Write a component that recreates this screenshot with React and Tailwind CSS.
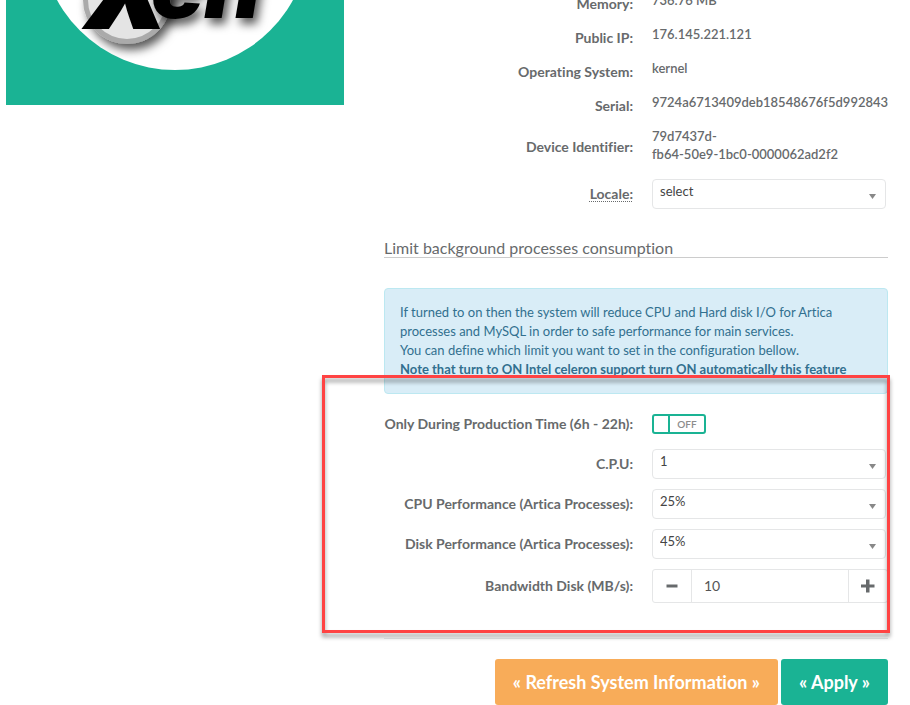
import React, { useState } from 'react';

const Row = ({ label, htmlFor, abbr, children }) => (
  <div className="flex items-center gap-[19px]">
    <label htmlFor={htmlFor} className="flex-1 pt-1 text-right text-sm leading-[18px] font-bold whitespace-nowrap">
      {abbr ? <span className="underline decoration-dotted decoration-1 underline-offset-2">{label}</span> : label}
    </label>
    <div className="w-[236px] shrink-0 self-start">{children}</div>
  </div>
);

const Value = ({ children }) => (
  <p className="text-[13px] leading-[18px] font-semibold">{children}</p>
);

const Select = ({ id, options }) => (
  <div className="relative mt-1 mr-0.5">
    <select
      id={id}
      className="block h-[30px] w-full appearance-none rounded-[4px] border border-[#e5e6e7] bg-white px-[7px] pb-1.5 text-[13px] leading-[18px] text-[#444]"
    >
      {options.map((option) => (
        <option key={option}>{option}</option>
      ))}
    </select>
    <svg className="pointer-events-none absolute right-2.5 bottom-2.5 h-[5px] w-[7px]" viewBox="0 0 7 5">
      <path d="M0 0H7L3.5 5Z" fill="#888" />
    </svg>
  </div>
);

const Switch = ({ id }) => {
  const [on, setOn] = useState(false);

  return (
    <div className="relative mt-1 flex h-5 w-[54px] overflow-hidden rounded-[3px] border-2 border-[#1ab394] bg-white">
      <input
        id={id}
        type="checkbox"
        checked={on}
        onChange={() => setOn(!on)}
        className="absolute inset-0 h-full w-full cursor-pointer appearance-none"
      />
      <span className="w-4 border-r-2 border-[#1ab394]" />
      <span className="flex-1 text-center text-[10px] leading-4 font-semibold text-[#8c8c8c]">{on ? 'ON' : 'OFF'}</span>
    </div>
  );
};

const Spinner = ({ id }) => {
  const [value, setValue] = useState(10);

  return (
    <div className="mt-1 flex h-[34px] rounded-[3px] border border-[#e5e6e7] bg-white">
      <button aria-label="-" onClick={() => setValue(value - 1)} className="flex w-[38px] items-center justify-center">
        <svg className="h-3.5 w-3.5" viewBox="0 0 14 14">
          <path d="M1.5 5.5h11v3h-11z" fill="#676a6c" />
        </svg>
      </button>
      <input
        id={id}
        value={value}
        onChange={(e) => setValue(Number(e.target.value) || 0)}
        className="w-0 flex-1 border-x border-[#e5e6e7] px-3 text-sm text-[#555]"
      />
      <button aria-label="+" onClick={() => setValue(value + 1)} className="flex w-[38px] items-center justify-center">
        <svg className="h-3.5 w-3.5" viewBox="0 0 14 14">
          <path d="M5 0.5h3.5v5h5v3h-5v5h-3.5v-5h-5v-3h5z" fill="#676a6c" />
        </svg>
      </button>
    </div>
  );
};

const XenLogo = () => (
  <svg className="block h-[105px] w-full bg-[#1ab394]" viewBox="0 0 338 105">
    <defs>
      <filter id="soft" x="-20%" y="-20%" width="150%" height="150%">
        <feDropShadow dx="4" dy="6" stdDeviation="5" floodColor="#000" floodOpacity="0.65" />
      </filter>
      <clipPath id="disc">
        <circle cx="169" cy="-64.5" r="134.5" />
      </clipPath>
    </defs>
    <circle cx="169" cy="-64.5" r="134.5" fill="#fff" />
    <g clipPath="url(#disc)">
      <g filter="url(#soft)">
        <circle cx="121" cy="0" r="44" fill="#aaa" />
        <circle cx="121" cy="0" r="39" fill="#e4e4e4" />
      </g>
      <g fontFamily="Inter, sans-serif" fontStyle="italic" fontWeight="900">
        <text x="80" y="29" fontSize="134">x</text>
        <text x="145" y="18" fontSize="88" filter="url(#soft)">en</text>
      </g>
    </g>
  </svg>
);

const App = () => {
  return (
    <div className="grid grid-cols-[338px_1fr] items-start gap-10 overflow-hidden bg-white pr-[22px] pl-1.5 font-['Lato',sans-serif] text-[#676a6c] [font-variant-ligatures:none]">
      <XenLogo />

      <main className="-mt-[9px]">
        <div className="flex flex-col gap-3">
          <Row label="Memory:"><Value>736.76 MB</Value></Row>
          <Row label="Public IP:"><Value>176.145.221.121</Value></Row>
          <Row label="Operating System:"><Value>kernel</Value></Row>
          <Row label="Serial:"><Value>9724a6713409deb18548676f5d992843</Value></Row>
          <Row label="Device Identifier:"><Value>79d7437d-<br />fb64-50e9-1bc0-0000062ad2f2</Value></Row>
          <Row label="Locale:" htmlFor="locale" abbr>
            <Select id="locale" options={['select']} />
          </Row>
        </div>

        <h2 className="mt-[30px] border-b border-[#ccc] text-base leading-[18px]">
          Limit background processes consumption
        </h2>

        <div className="mt-[30px] rounded-[4px] border border-[#bce8f1] bg-[#d9edf7] px-[15px] py-3.5 text-[13px] leading-[19px] text-[#31708f]">
          If turned to on then the system will reduce CPU and Hard disk I/O for Artica processes and MySQL in order to safe performance for main services.
          <br />
          You can define which limit you want to set in the configuration bellow.
          <br />
          <strong className="font-bold">Note that turn to ON Intel celeron support turn ON automatically this feature</strong>
        </div>

        <div className="relative border-b border-[#e7eaec] pt-4 pb-[35px]">
          <Row label="Only During Production Time (6h - 22h):" htmlFor="production">
            <Switch id="production" />
          </Row>
          <div className="mt-[11px] flex flex-col gap-1.5">
            <Row label="C.P.U:" htmlFor="cpu">
              <Select id="cpu" options={['1']} />
            </Row>
            <Row label="CPU Performance (Artica Processes):" htmlFor="cpu-perf">
              <Select id="cpu-perf" options={['25%']} />
            </Row>
            <Row label="Disk Performance (Artica Processes):" htmlFor="disk-perf">
              <Select id="disk-perf" options={['45%']} />
            </Row>
            <Row label="Bandwidth Disk (MB/s):" htmlFor="bandwidth">
              <Spinner id="bandwidth" />
            </Row>
          </div>
          <div className="pointer-events-none absolute -top-[19px] -right-0.5 bottom-[5px] -left-[62px] border-3 border-[#ff4343] drop-shadow-[0_4px_2px_rgba(0,0,0,0.4)]" />
        </div>

        <div className="mt-5 flex justify-end gap-[3px] text-lg leading-[46px] font-bold text-white">
          <button className="rounded-[3px] bg-[#f8ac59] px-[18px]">« Refresh System Information »</button>
          <button className="rounded-[3px] bg-[#1ab394] px-[18px]">« Apply »</button>
        </div>
      </main>
    </div>
  );
};

export default App;
